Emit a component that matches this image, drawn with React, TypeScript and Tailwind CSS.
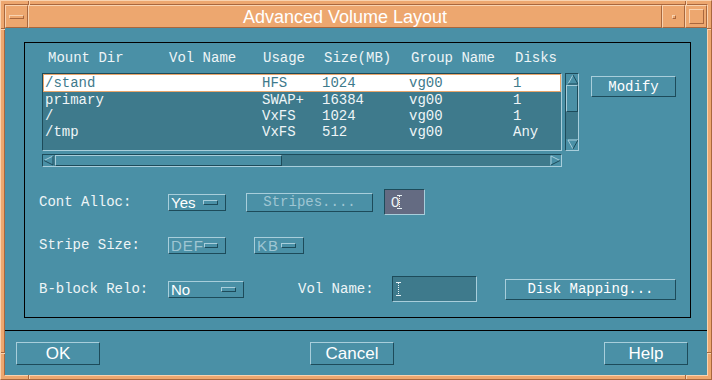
import React from 'react'

const mono = "font-['Liberation_Mono',monospace]"
const sans = "font-['Liberation_Sans',Arial,sans-serif]"

const raised = 'border border-t-[#a8cedb] border-l-[#a8cedb] border-b-[#1d4b5a] border-r-[#1d4b5a]'
const sunken = 'border border-t-[#1d4b5a] border-l-[#1d4b5a] border-b-[#a8cedb] border-r-[#a8cedb]'
const orangeRaised = 'border border-t-[#f9d3b0] border-l-[#f9d3b0] border-b-[#a9673d] border-r-[#a9673d]'

const rows = [
  { dir: '/stand', usage: 'HFS', size: '1024', group: 'vg00', disks: '1' },
  { dir: 'primary', usage: 'SWAP+', size: '16384', group: 'vg00', disks: '1' },
  { dir: '/', usage: 'VxFS', size: '1024', group: 'vg00', disks: '1' },
  { dir: '/tmp', usage: 'VxFS', size: '512', group: 'vg00', disks: 'Any' },
]

function Arrow({ dir }: { dir: 'up' | 'down' | 'left' | 'right' }) {
  // outlined motif arrows: light on the lit side, dark on the shadow side
  const paths = {
    up: { light: 'M1 10 L6 1', dark: 'M6 1 L11 10 L1 10' },
    down: { light: 'M1 1 L11 1 M1 1 L6 10', dark: 'M6 10 L11 1' },
    left: { light: 'M10 1 L1 5.5', dark: 'M1 5.5 L10 10 L10 1' },
    right: { light: 'M1 1 L10 5.5 M1 1 L1 10', dark: 'M1 10 L10 5.5' },
  }[dir]
  return (
    <svg width="11" height="11" viewBox="0 0 11 11" className="block">
      <path d={paths.light} stroke="#a8cedb" strokeWidth="1" fill="none" />
      <path d={paths.dark} stroke="#1d4b5a" strokeWidth="1" fill="none" />
    </svg>
  )
}

function OptionMenu({ text, width, disabled }: { text: string; width: string; disabled?: boolean }) {
  return (
    <div className={`${raised} ${width} h-[17px] flex items-center justify-between pl-[2px] pr-[7px] bg-[#4a90a6]`}>
      <span className={`${sans} text-[15px] leading-[15px] ${disabled ? 'text-[#9fc6d3] tracking-[1px]' : 'text-white'}`}>{text}</span>
      <span className={`${raised} w-[15px] h-[5px]`} />
    </div>
  )
}

function IBeam() {
  return (
    <svg width="5" height="14" viewBox="0 0 5 14" className="block">
      <path d="M0 0.5 H5 M0 13.5 H5" stroke="#e8f2f5" strokeWidth="1" />
      <path d="M2.5 1 V13" stroke="#e8f2f5" strokeWidth="1" strokeDasharray="1 1" />
    </svg>
  )
}

function Button({ children, className }: { children: React.ReactNode; className: string }) {
  return (
    <div className={`${raised} ${className} flex items-center justify-center text-white bg-[#4a90a6]`}>{children}</div>
  )
}

export default function App() {
  return (
    <div className={`w-[712px] h-[380px] relative bg-[#eda76f] ${orangeRaised} p-[3px]`}>
      {/* frame notches */}
      <div className="absolute left-[27px] top-0 w-px h-[4px] bg-[#a9673d]" />
      <div className="absolute left-[28px] top-0 w-px h-[4px] bg-[#f9d3b0]" />
      <div className="absolute left-[684px] top-0 w-px h-[4px] bg-[#a9673d]" />
      <div className="absolute left-[685px] top-0 w-px h-[4px] bg-[#f9d3b0]" />
      <div className="absolute left-[27px] bottom-0 w-px h-[4px] bg-[#a9673d]" />
      <div className="absolute left-[28px] bottom-0 w-px h-[4px] bg-[#f9d3b0]" />
      <div className="absolute left-[684px] bottom-0 w-px h-[4px] bg-[#a9673d]" />
      <div className="absolute left-[685px] bottom-0 w-px h-[4px] bg-[#f9d3b0]" />
      <div className="absolute left-0 top-[27px] w-[4px] h-px bg-[#a9673d]" />
      <div className="absolute left-0 top-[28px] w-[4px] h-px bg-[#f9d3b0]" />
      <div className="absolute right-0 top-[27px] w-[4px] h-px bg-[#a9673d]" />
      <div className="absolute right-0 top-[28px] w-[4px] h-px bg-[#f9d3b0]" />
      <div className="absolute left-0 top-[351px] w-[4px] h-px bg-[#a9673d]" />
      <div className="absolute left-0 top-[352px] w-[4px] h-px bg-[#f9d3b0]" />
      <div className="absolute right-0 top-[351px] w-[4px] h-px bg-[#a9673d]" />
      <div className="absolute right-0 top-[352px] w-[4px] h-px bg-[#f9d3b0]" />

      <div className="w-full h-full border border-t-[#a9673d] border-l-[#a9673d] border-b-[#f9d3b0] border-r-[#f9d3b0] flex flex-col">
        {/* title bar */}
        <div className="h-[23px] flex shrink-0">
          <div className={`${orangeRaised} w-[23px] flex items-center justify-center`}>
            <div className={`${orangeRaised} w-[15px] h-[4px]`} />
          </div>
          <div className={`${orangeRaised} flex-1 flex items-center justify-center`}>
            <span className={`${sans} text-[18px] leading-[20px] text-white`}>Advanced Volume Layout</span>
          </div>
          <div className={`${orangeRaised} w-[23px] flex items-center justify-center`}>
            <div className={`${orangeRaised} w-[4px] h-[4px]`} />
          </div>
          <div className={`${orangeRaised} w-[22px] flex items-center justify-center`}>
            <div className={`${orangeRaised} w-[15px] h-[15px]`} />
          </div>
        </div>

        {/* client area */}
        <div className="flex-1 bg-[#4a90a6] flex flex-col">
          <div className={`ml-[19px] mt-[14px] w-[667px] h-[276px] border border-black ${mono} text-[14px] leading-[16px] text-[#eef5f7]`}>
            {/* column headers */}
            <div className="mt-[7px] h-[16px] flex pl-[23px]">
              <span className="w-[121px]">Mount Dir</span>
              <span className="w-[94px]">Vol Name</span>
              <span className="w-[61px]">Usage</span>
              <span className="w-[87px]">Size(MB)</span>
              <span className="w-[104px]">Group Name</span>
              <span>Disks</span>
            </div>

            <div className="mt-[7px] flex items-start">
              <div className="ml-[17px] flex flex-col">
                {/* list */}
                <div className={`${sunken} w-[520px] h-[78px] bg-[#3e7a8c]`}>
                  {rows.map((r, i) => (
                    <div
                      key={r.dir}
                      className={
                        i === 0
                          ? 'h-[18px] flex items-center bg-white border border-[#e9a66c] pl-[1px] text-[#3e7a8c]'
                          : 'h-[16px] flex items-center pl-[2px]'
                      }
                    >
                      <span className="w-[217px]">{r.dir}</span>
                      <span className="w-[60px]">{r.usage}</span>
                      <span className="w-[87px]">{r.size}</span>
                      <span className="w-[104px]">{r.group}</span>
                      <span>{r.disks}</span>
                    </div>
                  ))}
                </div>
                {/* horizontal scrollbar */}
                <div className={`${sunken} mt-[3px] w-[520px] h-[13px] bg-[#3e7a8c] flex items-center`}>
                  <div className="w-[11px] h-[11px] bg-[#4a90a6]">
                    <Arrow dir="left" />
                  </div>
                  <div className={`${raised} ml-px w-[227px] h-[11px] bg-[#4a90a6]`} />
                  <div className="flex-1" />
                  <div className="w-[11px] h-[11px] bg-[#4a90a6]">
                    <Arrow dir="right" />
                  </div>
                </div>
              </div>

              {/* vertical scrollbar */}
              <div className={`${sunken} ml-[3px] w-[14px] h-[78px] bg-[#3e7a8c] flex flex-col items-center`}>
                <div className="w-[12px] h-[11px] bg-[#4a90a6] flex justify-center">
                  <Arrow dir="up" />
                </div>
                <div className={`${raised} w-[12px] h-[27px] bg-[#4a90a6]`} />
                <div className="flex-1" />
                <div className="w-[12px] h-[11px] bg-[#4a90a6] flex justify-center">
                  <Arrow dir="down" />
                </div>
              </div>

              <Button className="ml-[12px] mt-[3px] w-[85px] h-[21px]">Modify</Button>
            </div>

            {/* Cont Alloc */}
            <div className="mt-[22px] h-[26px] flex items-center pl-[14px]">
              <span className="w-[129px]">Cont Alloc:</span>
              <OptionMenu text="Yes" width="w-[58px]" />
              <div className={`${raised} ml-[20px] w-[127px] h-[19px] flex items-center justify-center text-[#9fc6d3]`}>
                Stripes....
              </div>
              <div className={`${sunken} ml-[11px] w-[41px] h-[26px] bg-[#646b82] flex items-center pl-[6px] ${sans} text-[15px]`}>
                <span>0</span>
                <span className="-ml-[2px]">
                  <IBeam />
                </span>
              </div>
            </div>

            {/* Stripe Size */}
            <div className="mt-[17px] h-[26px] flex items-center pl-[14px]">
              <span className="w-[129px]">Stripe Size:</span>
              <OptionMenu text="DEF" width="w-[58px]" disabled />
              <div className="ml-[28px]">
                <OptionMenu text="KB" width="w-[50px]" disabled />
              </div>
            </div>

            {/* B-block Relo */}
            <div className="mt-[18px] h-[26px] flex items-center pl-[14px]">
              <span className="w-[129px]">B-block Relo:</span>
              <OptionMenu text="No" width="w-[76px]" />
              <span className="ml-[54px] w-[94px]">Vol Name:</span>
              <div className={`${sunken} w-[85px] h-[26px] bg-[#3e7a8c] flex items-center pl-[3px]`}>
                <IBeam />
              </div>
              <Button className="ml-[28px] w-[171px] h-[21px]">Disk Mapping...</Button>
            </div>
          </div>

          {/* separator */}
          <div className="mt-[12px] h-px bg-black" />

          {/* action buttons */}
          <div className={`mt-[11px] flex justify-between pl-[11px] pr-[19px] ${sans} text-[17px]`}>
            <Button className="w-[84px] h-[23px]">OK</Button>
            <Button className="w-[84px] h-[23px]">Cancel</Button>
            <Button className="w-[84px] h-[23px]">Help</Button>
          </div>
        </div>
      </div>
    </div>
  )
}
